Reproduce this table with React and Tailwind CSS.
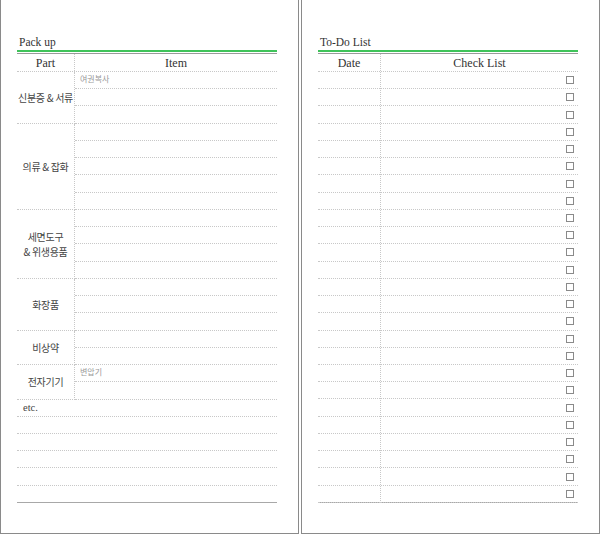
const serif = { fontFamily: '"Liberation Serif", "DejaVu Serif", serif' };
const kr = { fontFamily: '"Noto Sans CJK KR", "Noto Sans", sans-serif' };

const ROW = "h-[17.24px] border-b border-dotted border-[#c8c8c8]";

const groups = [
  { label: ["신분증 & 서류"], rows: 3, notes: { 0: "여권복사" } },
  { label: ["의류 & 잡화"], rows: 5 },
  { label: ["세면도구", "& 위생용품"], rows: 4 },
  { label: ["화장품"], rows: 3 },
  { label: ["비상약"], rows: 2 },
  { label: ["전자기기"], rows: 2, notes: { 0: "변압기" } },
];

const Panel = ({ title, children }) => (
  <div className="w-[299px] h-[534px] shrink-0 border-x border-b border-[#8a8a8a] bg-white pl-[16px] pr-[21px] pt-[33px]">
    <div className="text-[11.5px] leading-[14px] pt-[2px] text-[#333] pl-[2px] h-[17px]" style={serif}>
      {title}
    </div>
    <div className="h-[2px] bg-[#3fc35a]" />
    <div className="h-[1px] mt-[1px] bg-[#9a9a9a]" />
    {children}
    <div className="h-[1px] bg-[#a8a8a8] -mt-[1px]" />
  </div>
);

const PackUp = () => (
  <Panel title="Pack up">
    <div className={`flex ${ROW} h-[18px] text-[12px] text-[#333]`} style={serif}>
      <div className="w-[58px] border-r border-dotted border-[#c8c8c8] flex items-center justify-center">Part</div>
      <div className="flex-1 flex items-center justify-center">Item</div>
    </div>
    {groups.map((g, gi) => (
      <div key={gi} className="flex">
        <div
          className="w-[58px] border-r border-b border-dotted border-[#c8c8c8] flex flex-col items-center justify-center whitespace-nowrap tracking-[-0.3px] text-[10px] leading-[15px] text-[#444]"
          style={{ ...kr, height: `${g.rows * 17.24}px` }}
        >
          {g.label.map((l) => (
            <div key={l}>{l}</div>
          ))}
        </div>
        <div className="flex-1">
          {Array.from({ length: g.rows }).map((_, i) => (
            <div key={i} className={ROW}>
              {g.notes && g.notes[i] && (
                <div className="pl-[5px] text-[8px] leading-[14px] text-[#999]" style={kr}>
                  {g.notes[i]}
                </div>
              )}
            </div>
          ))}
        </div>
      </div>
    ))}
    <div className={`${ROW} pl-[6px] text-[10.5px] leading-[15px] text-[#444]`} style={serif}>
      etc.
    </div>
    {Array.from({ length: 5 }).map((_, i) => (
      <div key={i} className={ROW} />
    ))}
  </Panel>
);

const ToDo = () => (
  <Panel title="To-Do List">
    <div className="flex">
      <div className="w-[63px] border-r border-dotted border-[#c8c8c8]">
        <div className={`${ROW} h-[18px] flex items-center justify-center text-[12px] text-[#333]`} style={serif}>
          Date
        </div>
        {Array.from({ length: 25 }).map((_, i) => (
          <div key={i} className={ROW} />
        ))}
      </div>
      <div className="flex-1">
        <div className={`${ROW} h-[18px] flex items-center justify-center text-[12px] text-[#333]`} style={serif}>
          Check List
        </div>
        {Array.from({ length: 25 }).map((_, i) => (
          <div key={i} className={`${ROW} flex items-center justify-end pr-[4px]`}>
            <div className="w-[8px] h-[8px] border border-[#8a8a8a]" />
          </div>
        ))}
      </div>
    </div>
  </Panel>
);

export default function App() {
  return (
    <div className="w-[600px] h-[534px] flex gap-[2px] bg-white">
      <PackUp />
      <ToDo />
    </div>
  );
}
